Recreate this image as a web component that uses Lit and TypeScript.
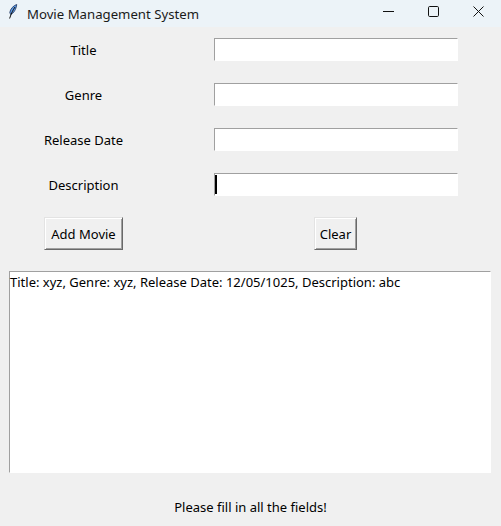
import { LitElement, html, css } from "lit";
import { customElement } from "lit/decorators.js";

@customElement("app-root")
export class AppRoot extends LitElement {
  static styles = css`
    :host {
      display: block;
      width: 501px;
      height: 526px;
      background: #f0f0f0;
      color: #000;
      font-family: "Noto Sans", "Open Sans", sans-serif;
      font-size: 13px;
      overflow: hidden;
    }
    .titlebar {
      height: 27px;
      background: #ecf3f8;
      display: flex;
      align-items: center;
      color: #1a1a1a;
      font-size: 13.2px;
    }
    .feather {
      width: 12px;
      height: 16px;
      margin: 4px 7px 0 8px;
      align-self: flex-start;
      flex: none;
    }
    .title { flex: 1; white-space: nowrap; }
    .win {
      width: 45px;
      height: 23px;
      align-self: flex-start;
      display: flex;
      align-items: center;
      justify-content: center;
      flex: none;
    }
    .form {
      display: grid;
      grid-template-columns: 79px 244px;
      grid-auto-rows: 45px;
      column-gap: 91px;
      padding-left: 44px;
      align-items: center;
      justify-items: center;
    }
    .label { white-space: nowrap; line-height: 20px; }
    .entry {
      position: relative;
      box-sizing: border-box;
      width: 244px;
      height: 23px;
      background: #fff;
      border-style: solid;
      border-width: 1px;
      border-color: #a0a0a0 #fff #fff #a0a0a0;
      display: block;
    }
    .entry input {
      display: block;
      width: 100%;
      height: 100%;
      box-sizing: border-box;
      border: 0;
      padding: 0;
      margin: 0;
      background: transparent;
      outline: none;
    }
    .caret {
      position: absolute;
      left: 0;
      top: 1px;
      width: 2px;
      height: 19px;
      background: #000;
    }
    .actions {
      display: grid;
      grid-template-columns: 79px 243px;
      column-gap: 91px;
      padding: 10px 0 0 44px;
      justify-items: center;
    }
    button {
      height: 33px;
      box-sizing: border-box;
      margin: 0;
      padding: 0;
      font: inherit;
      color: #000;
      white-space: nowrap;
      background: #f0f0f0;
      border-style: solid;
      border-width: 1px;
      border-color: #e3e3e3 #696969 #696969 #e3e3e3;
      box-shadow: inset 1px 1px 0 #fff, inset -1px -1px 0 #a0a0a0;
    }
    .add { width: 79px; }
    .clear { width: 43px; }
    .output {
      box-sizing: border-box;
      margin: 21px 10px 0 9px;
      height: 202px;
      background: #fff;
      border-style: solid;
      border-width: 1px;
      border-color: #a0a0a0 #fff #fff #a0a0a0;
      padding: 0;
      line-height: 20px;
      white-space: pre-wrap;
    }
    .status {
      margin-top: 24px;
      text-align: center;
      line-height: 20px;
    }
  `;

  render() {
    const fields = ["Title", "Genre", "Release Date", "Description"];
    return html`
      <div class="titlebar">
        <svg class="feather" viewBox="0 0 12 16">
          <path d="M8.7 0.5 C5.5 1.5 2.2 5 1.8 8.5 L2.6 10.5 C5.5 9.5 8.4 5 8.7 0.5 Z" fill="#5d9be8" stroke="#2a3f66" stroke-width="0.9"/>
          <path d="M7 3 C5 6 3.4 9 1.6 14.5" fill="none" stroke="#111" stroke-width="1"/>
        </svg>
        <span class="title">Movie Management System</span>
        <span class="win">
          <svg width="11" height="11" viewBox="0 0 11 11"><path d="M0 5.5H11" stroke="#111" stroke-width="1"/></svg>
        </span>
        <span class="win">
          <svg width="11" height="11" viewBox="0 0 11 11"><rect x="0.5" y="0.5" width="10" height="10" rx="1.2" fill="none" stroke="#111" stroke-width="1"/></svg>
        </span>
        <span class="win">
          <svg width="11" height="11" viewBox="0 0 11 11"><path d="M0.5 0.5L10.5 10.5M10.5 0.5L0.5 10.5" stroke="#111" stroke-width="1"/></svg>
        </span>
      </div>
      <div class="form">
        ${fields.map(
          (f, i) => html`
            <span class="label">${f}</span>
            <span class="entry"><input type="text" aria-label=${f} />${i === 3 ? html`<span class="caret"></span>` : ""}</span>
          `
        )}
      </div>
      <div class="actions">
        <button class="add">Add Movie</button>
        <button class="clear">Clear</button>
      </div>
      <div class="output">Title: xyz, Genre: xyz, Release Date: 12/05/1025, Description: abc</div>
      <div class="status">Please fill in all the fields!</div>
    `;
  }
}
